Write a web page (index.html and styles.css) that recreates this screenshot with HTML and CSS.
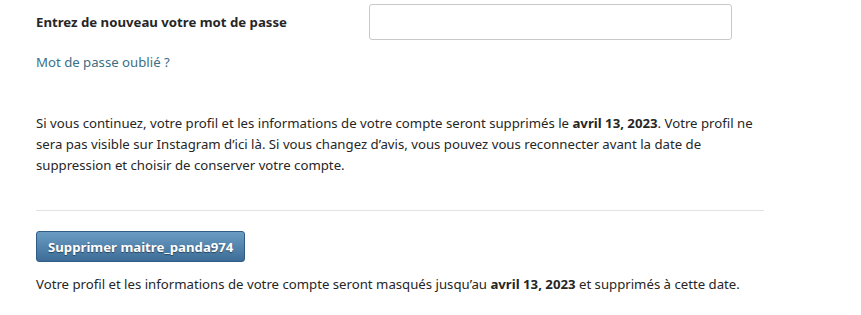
FILE: index.html
```html
<!DOCTYPE html>
<html lang="fr">
<head>
<meta charset="utf-8">
<link rel="stylesheet" href="styles.css">
</head>
<body>
<div class="page">
  <div class="field-row">
    <label class="field-label" for="pw">Entrez de nouveau votre mot de passe</label>
    <input class="field-input" id="pw" type="password">
  </div>
  <a class="forgot" href="#">Mot de passe oublié ?</a>
  <p class="info">Si vous continuez, votre profil et les informations de votre compte seront supprimés le <b>avril 13, 2023</b>. Votre profil ne sera pas visible sur Instagram d’ici là. Si vous changez d’avis, vous pouvez vous reconnecter avant la date de suppression et choisir de conserver votre compte.</p>
  <hr class="sep">
  <button class="delete-btn" type="button">Supprimer maitre_panda974</button>
  <p class="note">Votre profil et les informations de votre compte seront masqués jusqu’au <b>avril 13, 2023</b> et supprimés à cette date.</p>
</div>
</body>
</html>
```
FILE: styles.css
```css
html, body {
  margin: 0;
  padding: 0;
  background: #fff;
}
body {
  font-family: "Noto Sans", "Open Sans", sans-serif;
  font-size: 13.2px;
  color: #262626;
}
.page {
  width: 728px;
  padding: 4px 0 0 36px;
}
.field-row {
  display: flex;
  align-items: center;
  height: 36px;
}
.field-label {
  width: 333px;
  font-weight: 700;
  color: #262626;
}
.field-input {
  width: 363px;
  height: 36px;
  box-sizing: border-box;
  border: 1px solid #c9c9c9;
  border-radius: 3px;
  background: #fff;
  margin: 0;
  padding: 0 8px;
}
.forgot {
  display: block;
  margin-top: 12px;
  line-height: 20px;
  color: #3b6f85;
  text-decoration: none;
}
.info {
  margin: 41px 0 0;
  line-height: 21px;
  width: 728px;
}
.sep {
  margin: 34px 0 0;
  border: 0;
  border-top: 1px solid #e3e3e3;
  width: 728px;
}
.delete-btn {
  display: block;
  margin-top: 20px;
  height: 31px;
  padding: 0 11px;
  border: 1px solid #2f5b85;
  border-radius: 3px;
  background: linear-gradient(#6a9cc4, #3d6d97);
  color: #fff;
  font-family: inherit;
  font-size: 13.2px;
  font-weight: 700;
  text-shadow: 0 1px 1px rgba(0, 0, 0, 0.45);
}
.note {
  margin: 12px 0 0;
  line-height: 20px;
}
```
